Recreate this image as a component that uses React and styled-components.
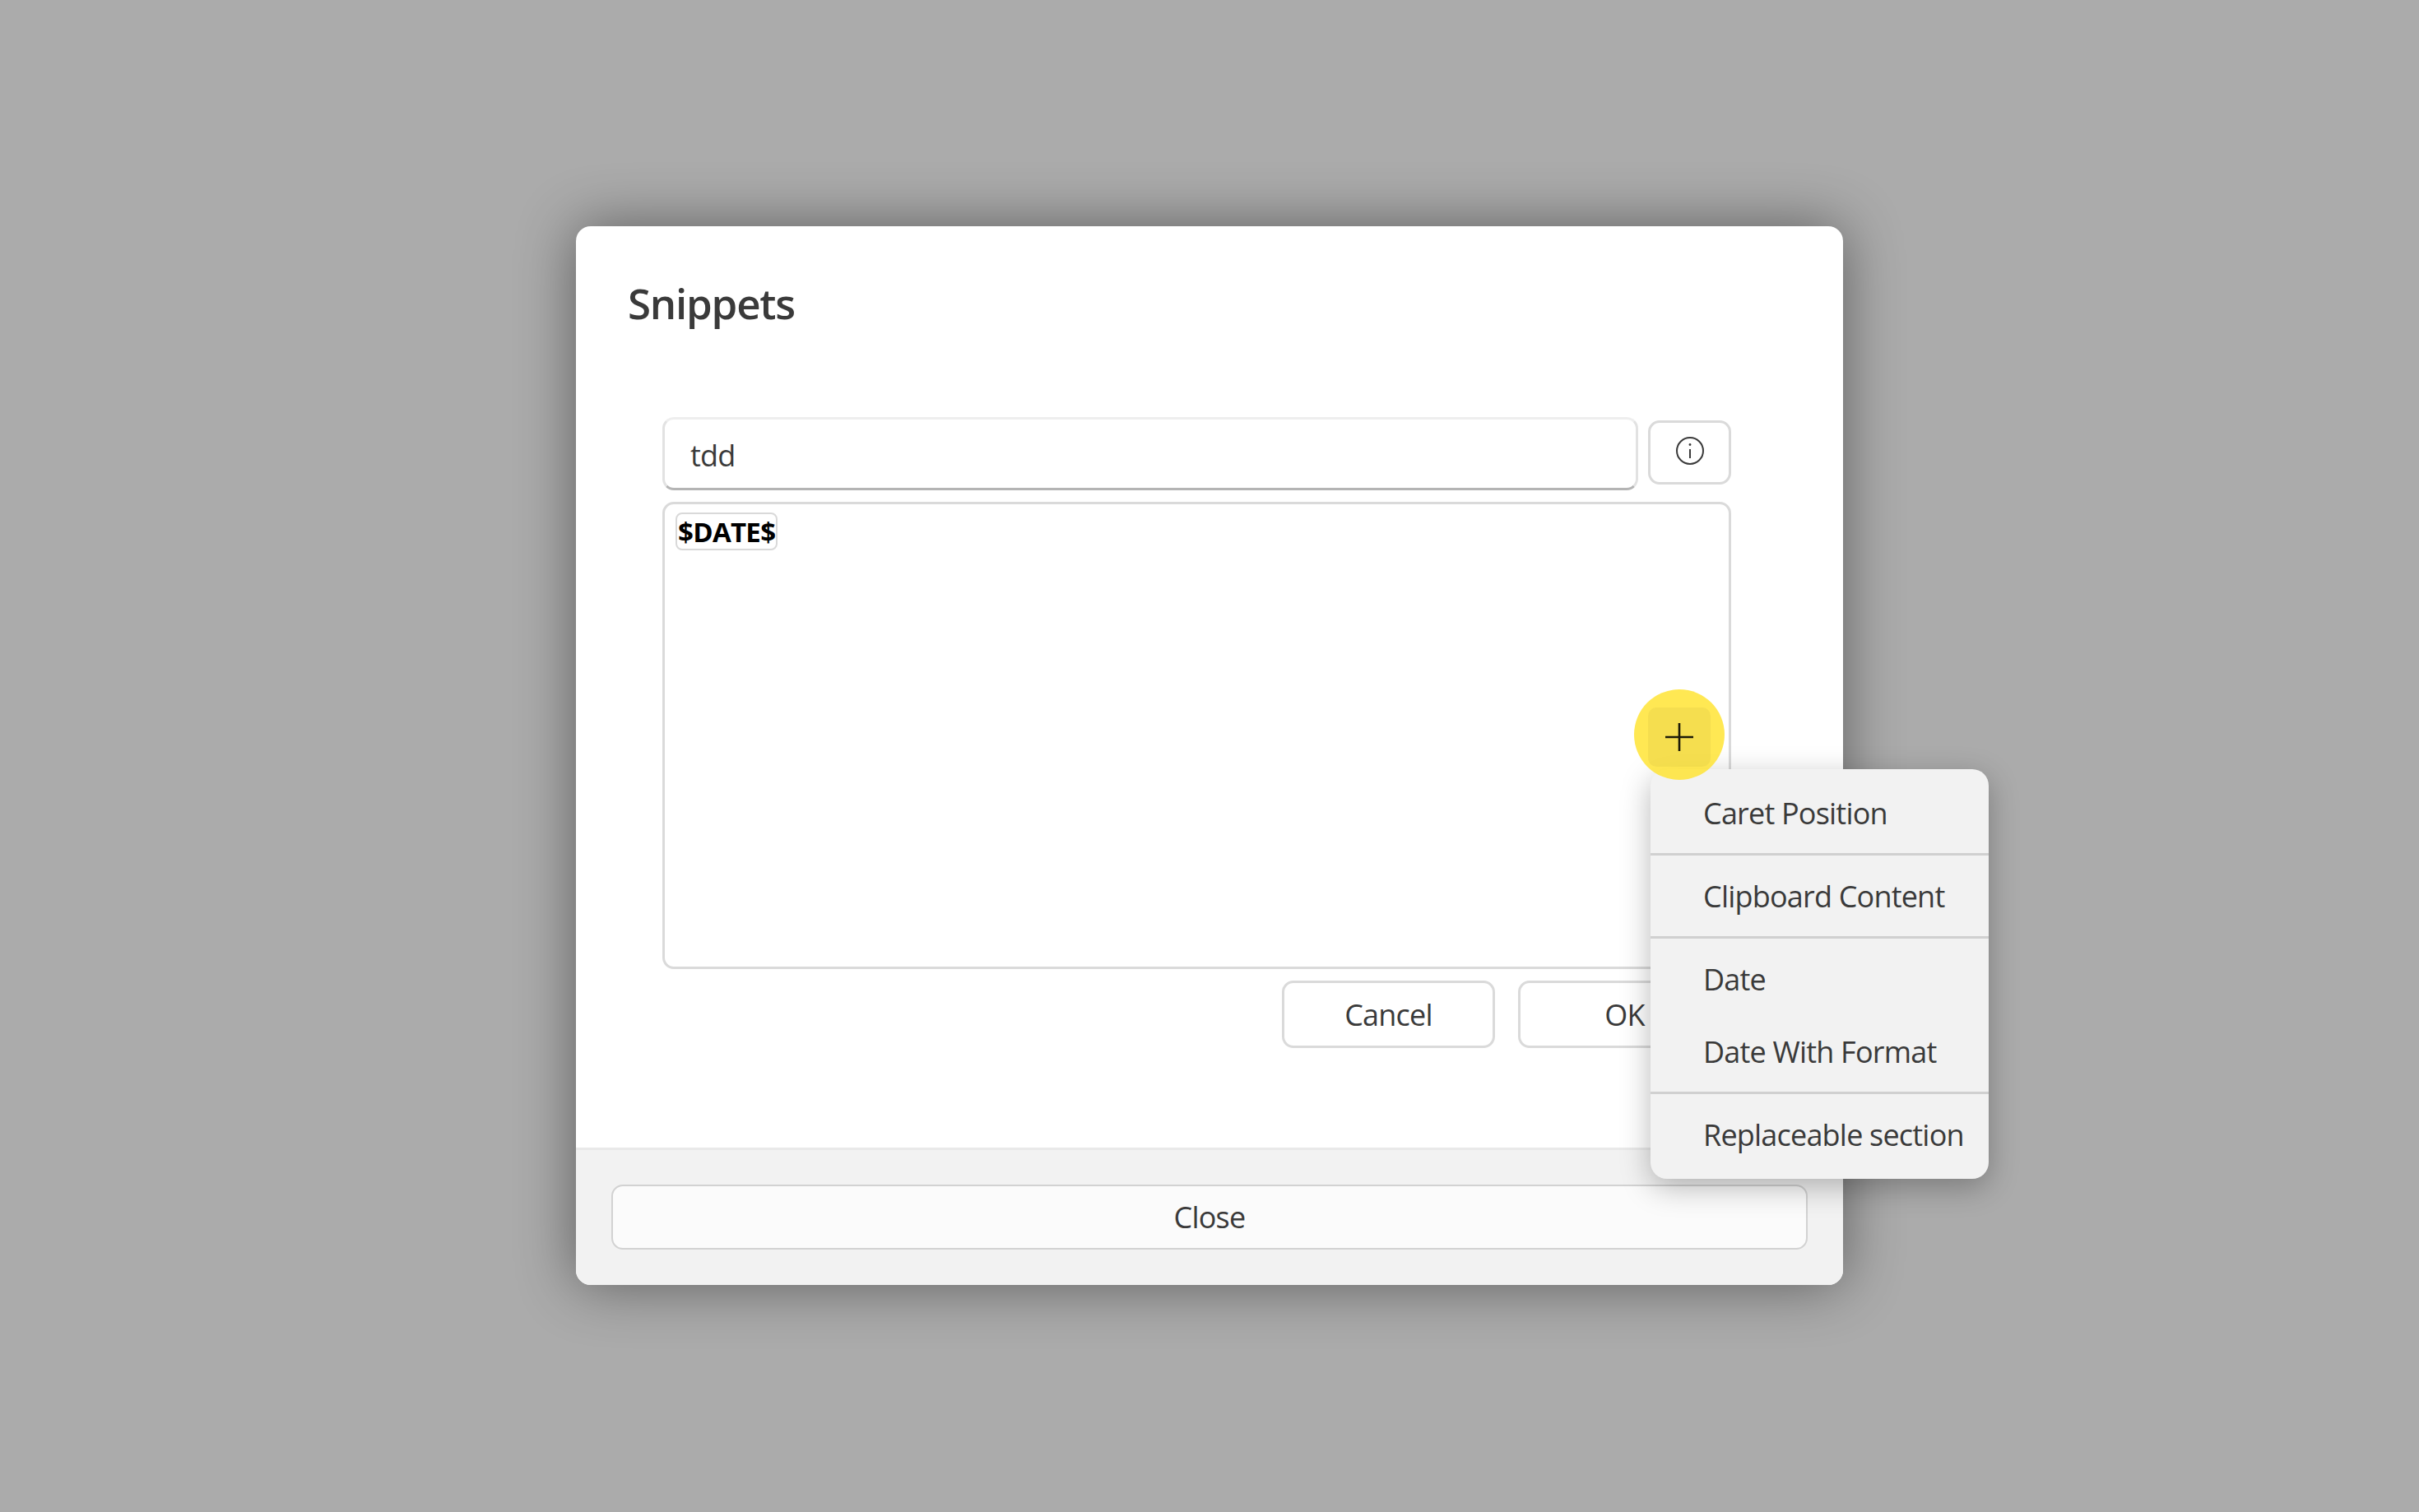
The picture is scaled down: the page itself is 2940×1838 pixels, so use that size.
import React from 'react';
import styled, { createGlobalStyle } from 'styled-components';

const GlobalStyle = createGlobalStyle`
  html, body {
    margin: 0;
    padding: 0;
    background: #ababab;
  }
  * {
    box-sizing: border-box;
  }
`;

const uiFont = `"Open Sans", "Noto Sans", sans-serif`;

const Page = styled.div`
  width: 100%;
  height: 1838px;
  padding-bottom: 1px;
  display: flex;
  align-items: center;
  justify-content: center;
  font-family: ${uiFont};
  color: #3a3a3a;
`;

const Dialog = styled.div`
  position: relative;
  width: 1540px;
  height: 1287px;
  display: flex;
  flex-direction: column;
  background: #fff;
  border-radius: 18px;
  box-shadow: 0 0 70px rgba(0, 0, 0, 0.45);
`;

const Header = styled.div`
  height: 232px;
  padding: 59px 0 0 63px;
`;

const Title = styled.h1`
  margin: 0;
  font-size: 51px;
  line-height: 68px;
  font-weight: 600;
  letter-spacing: -1.2px;
  color: #3a3a3a;
`;

const Body = styled.div`
  flex: 1;
  display: flex;
  flex-direction: column;
  padding: 0 136px 0 105px;
`;

const InputRow = styled.div`
  display: flex;
  align-items: flex-start;
  gap: 12px;
  height: 89px;
`;

const NameInput = styled.div`
  flex: 1;
  height: 89px;
  display: flex;
  align-items: center;
  padding: 4px 0 0 31px;
  background: #fff;
  border: 3px solid #e2e2e2;
  border-top-color: #eeeeee;
  border-bottom-color: #b4b4b4;
  border-radius: 14px;
  font-size: 36px;
  letter-spacing: -0.8px;
`;

const outlined = `
  background: #fff;
  border: 3px solid #dadada;
  border-radius: 14px;
`;

const InfoButton = styled.div`
  ${outlined}
  width: 101px;
  height: 78px;
  margin-top: 4px;
  display: flex;
  align-items: center;
  justify-content: center;
  padding-bottom: 4px;
  color: #3a3a3a;
`;

const Editor = styled.div`
  ${outlined}
  position: relative;
  height: 568px;
  margin-top: 14px;
  padding: 10px 13px;
`;

const Chip = styled.span`
  display: inline-block;
  height: 46px;
  padding: 0 1px;
  border: 2px solid #d9d9d9;
  border-radius: 8px;
  font-size: 33px;
  line-height: 44px;
  font-weight: 700;
  letter-spacing: -0.7px;
  color: #000;
`;

const Highlight = styled.div`
  position: absolute;
  right: 5px;
  bottom: 227px;
  z-index: 3;
  width: 110px;
  height: 110px;
  padding-top: 6px;
  display: flex;
  align-items: center;
  justify-content: center;
  border-radius: 50%;
  background: rgba(255, 226, 40, 0.8);
`;

const AddButton = styled.div`
  width: 76px;
  height: 72px;
  display: flex;
  align-items: center;
  justify-content: center;
  border-radius: 10px;
  background: rgba(0, 0, 0, 0.04);
`;

const ActionRow = styled.div`
  display: flex;
  justify-content: flex-end;
  gap: 28px;
  margin-top: 14px;
`;

const ActionButton = styled.div`
  ${outlined}
  width: 259px;
  height: 82px;
  display: flex;
  align-items: center;
  justify-content: center;
  font-size: 36px;
  letter-spacing: -0.8px;
`;

const Footer = styled.div`
  height: 167px;
  padding: 42px 43px 0;
  background: #f2f2f2;
  border-top: 3px solid #e9e9e9;
  border-radius: 0 0 18px 18px;
`;

const CloseButton = styled.div`
  height: 79px;
  display: flex;
  align-items: center;
  justify-content: center;
  background: #fbfbfb;
  border: 2px solid #d2d2d2;
  border-radius: 14px;
  font-size: 36px;
  letter-spacing: -0.8px;
`;

const Menu = styled.div`
  position: absolute;
  top: 660px;
  right: -177px;
  z-index: 2;
  width: 411px;
  padding: 9px 0 10px;
  background: #f2f2f2;
  border-radius: 20px;
  box-shadow: 0 10px 36px rgba(0, 0, 0, 0.28);
`;

const MenuItem = styled.div`
  height: 88px;
  padding-left: 64px;
  display: flex;
  align-items: center;
  font-size: 36px;
  letter-spacing: -0.8px;
  white-space: nowrap;
`;

const MenuSeparator = styled.div`
  height: 3px;
  margin: 5px 0;
  background: #d0d0d0;
`;

function InfoIcon() {
  return (
    <svg width="36" height="36" viewBox="0 0 36 36" fill="none" stroke="currentColor" strokeWidth="2">
      <circle cx="18" cy="18" r="16" />
      <path d="M18 16v11" />
      <circle cx="18" cy="10.5" r="1.4" fill="currentColor" stroke="none" />
    </svg>
  );
}

function PlusIcon() {
  return (
    <svg width="34" height="34" viewBox="0 0 34 34" fill="none" stroke="#1c1a08" strokeWidth="2.6">
      <path d="M17 0v34M0 17h34" />
    </svg>
  );
}

export default function App() {
  return (
    <Page>
      <GlobalStyle />
      <Dialog>
        <Header>
          <Title>Snippets</Title>
        </Header>
        <Body>
          <InputRow>
            <NameInput>tdd</NameInput>
            <InfoButton>
              <InfoIcon />
            </InfoButton>
          </InputRow>
          <Editor>
            <Chip>$DATE$</Chip>
            <Highlight>
              <AddButton>
                <PlusIcon />
              </AddButton>
            </Highlight>
          </Editor>
          <ActionRow>
            <ActionButton>Cancel</ActionButton>
            <ActionButton>OK</ActionButton>
          </ActionRow>
        </Body>
        <Footer>
          <CloseButton>Close</CloseButton>
        </Footer>
        <Menu>
          <MenuItem>Caret Position</MenuItem>
          <MenuSeparator />
          <MenuItem>Clipboard Content</MenuItem>
          <MenuSeparator />
          <MenuItem>Date</MenuItem>
          <MenuItem>Date With Format</MenuItem>
          <MenuSeparator />
          <MenuItem>Replaceable section</MenuItem>
        </Menu>
      </Dialog>
    </Page>
  );
}
